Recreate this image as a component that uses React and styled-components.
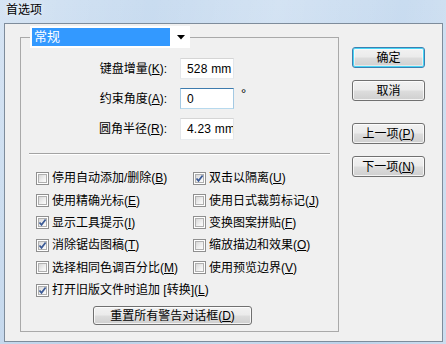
import React from "react";
import styled, { createGlobalStyle, css } from "styled-components";

const Global = createGlobalStyle`
  html, body { margin: 0; padding: 0; }
  body {
    font-family: "Liberation Sans", "Noto Sans CJK SC", sans-serif;
    font-size: 12px;
    color: #000;
    background: #c3d7ec;
  }
`;

const Frame = styled.div`
  width: 446px;
  height: 344px;
  box-sizing: border-box;
  display: flex;
  flex-direction: column;
  background:
    linear-gradient(100deg, rgba(255,255,255,0.25) 0%, rgba(255,255,255,0) 30%, rgba(255,255,255,0.2) 55%, rgba(255,255,255,0) 80%, rgba(255,255,255,0.25) 100%),
    linear-gradient(180deg, #c9dcf0 0%, #bcd2ea 100%);
`;

const TitleBar = styled.div`
  height: 23px;
  flex: none;
  display: flex;
  align-items: center;
  padding-left: 6px;
  padding-bottom: 3px;
  box-sizing: border-box;
  font-size: 12px;
  line-height: 14px;
  color: #000;
  text-shadow: 0 0 6px rgba(255,255,255,0.9);
`;

const Dialog = styled.div`
  margin-left: 4px;
  width: 439px;
  height: 319px;
  box-sizing: border-box;
  border: 1px solid #7e8c9b;
  background: #f0f0f0;
  display: flex;
  align-items: flex-start;
  padding-left: 15px;
`;

const Group = styled.fieldset`
  margin: 2px 0 0 0;
  padding: 0 0 6px 0;
  width: 319px;
  box-sizing: border-box;
  border: 1px solid #a9a9a9;
  min-width: 0;
`;

const Legend = styled.legend`
  margin-left: 9px;
  width: 160px;
  height: 22px;
  box-sizing: border-box;
  background: #fff;
  display: flex;
  align-items: center;
  padding: 2px 0 2px 2px;
`;

const Selected = styled.span`
  width: 138px;
  height: 18px;
  background: #3399ff;
  color: #fff;
  font-size: 13px;
  line-height: 18px;
  padding-left: 2px;
  box-sizing: border-box;
`;

const Arrow = styled.span`
  flex: 1;
  display: flex;
  justify-content: center;
  align-items: center;
  padding-left: 2px;
`;

const Fields = styled.div`
  margin-top: 10px;
  display: grid;
  grid-template-columns: 146px 54px auto;
  grid-auto-rows: 21px;
  column-gap: 13px;
  row-gap: 9px;
`;

const Label = styled.label`
  text-align: right;
  align-self: center;
  line-height: 14px;
  white-space: nowrap;
`;

const Input = styled.div`
  box-sizing: border-box;
  height: ${p => (p.$tall ? 22 : 21)}px;
  background: #fff;
  border: 1px solid;
  border-color: ${p =>
    p.$focus ? "#3d7bad #a4c9e3 #b7d9ed #a4c9e3" : "#d5d5d5 #e3e6ea #e9ecef #e3e6ea"};
  padding: 0 0 0 6px;
  display: flex;
  align-items: center;
  overflow: hidden;
  white-space: nowrap;
  font-size: 12px;
  line-height: 14px;
  letter-spacing: 0.2px;
`;

const Degree = styled.span`
  align-self: start;
  margin-left: -6px;
  font-size: 13px;
  line-height: 12px;
`;

const Separator = styled.div`
  margin: 14px 8px 0 8px;
  height: 1px;
  background: #a3a3a3;
  box-shadow: 0 1px 0 #fff;
`;

const Checks = styled.div`
  margin-top: 13px;
  padding-left: 15px;
  display: grid;
  grid-template-columns: 157px 1fr;
  grid-auto-rows: 22.4px;
`;

const CheckRow = styled.div`
  display: flex;
  align-items: center;
  gap: 3px;
  white-space: nowrap;
  line-height: 14px;
  ${p => p.$span && css`grid-column: 1 / span 2;`}
`;

const Box = styled.span`
  width: 13px;
  height: 13px;
  flex: none;
  box-sizing: border-box;
  border: 1px solid #8f8f8f;
  background: #fff;
  padding: 1px;
  display: flex;
  & > span {
    flex: 1;
    border: 1px solid #b0b0b0;
    background: linear-gradient(135deg, #d8d8d8 0%, #f0f0f0 60%, #fdfdfd 100%);
    display: flex;
    align-items: center;
    justify-content: center;
    position: relative;
  }
`;

const Check = styled.svg`
  position: absolute;
  left: -1px;
  top: -1px;
`;

const ResetRow = styled.div`
  margin-top: 5px;
  padding-left: 72px;
  display: flex;
`;

const Button = styled.button`
  font-family: inherit;
  font-size: 12px;
  line-height: 14px;
  color: #000;
  box-sizing: border-box;
  width: ${p => p.$w}px;
  height: ${p => p.$h || 21}px;
  margin: 0;
  padding: 0;
  border: 1px solid #707070;
  border-radius: 3px;
  background: linear-gradient(180deg, #f2f2f2 0%, #ebebeb 48%, #dddddd 52%, #cfcfcf 100%);
  box-shadow: inset 0 0 0 1px rgba(255,255,255,0.75);
  display: flex;
  align-items: center;
  justify-content: center;
  ${p => p.$default && css`
    border-color: #3c7fb1;
    box-shadow: inset 0 0 0 1px #48d6f6, inset 0 0 0 2px rgba(255,255,255,0.5);
  `}
`;

const Side = styled.div`
  margin-left: 13px;
  padding-top: 23px;
  display: flex;
  flex-direction: column;
`;

const Gap = styled.div`
  height: ${p => p.$h}px;
`;

function CheckBox({ checked }) {
  return (
    <Box>
      <span>
        {checked && (
          <Check width="9" height="9" viewBox="0 0 9 9">
            <path d="M1.5 4.5 L3.5 6.8 L7.6 1.4" fill="none" stroke="#3b5a96" strokeWidth="1.7" />
          </Check>
        )}
      </span>
    </Box>
  );
}

function Item({ checked, text, k, span }) {
  return (
    <CheckRow $span={span}>
      <CheckBox checked={checked} />
      <span>
        {text}(<u>{k}</u>)
      </span>
    </CheckRow>
  );
}

export default function App() {
  return (
    <>
      <Global />
      <Frame>
        <TitleBar>首选项</TitleBar>
        <Dialog>
          <Group>
            <Legend>
              <Selected>常规</Selected>
              <Arrow>
                <svg width="8" height="5" viewBox="0 0 8 5">
                  <path d="M0 0 H8 L4 4.5 Z" fill="#000" />
                </svg>
              </Arrow>
            </Legend>
            <Fields>
              <Label>键盘增量(<u>K</u>):</Label>
              <Input>528 mm</Input>
              <span />
              <Label>约束角度(<u>A</u>):</Label>
              <Input $focus>0</Input>
              <Degree>°</Degree>
              <Label>圆角半径(<u>R</u>):</Label>
              <Input $tall>4.23 mm</Input>
              <span />
            </Fields>
            <Separator />
            <Checks>
              <Item text="停用自动添加/删除" k="B" />
              <Item checked text="双击以隔离" k="U" />
              <Item text="使用精确光标" k="E" />
              <Item text="使用日式裁剪标记" k="J" />
              <Item checked text="显示工具提示" k="I" />
              <Item text="变换图案拼贴" k="F" />
              <Item checked text="消除锯齿图稿" k="T" />
              <Item text="缩放描边和效果" k="O" />
              <Item text="选择相同色调百分比" k="M" />
              <Item text="使用预览边界" k="V" />
              <Item checked span text="打开旧版文件时追加 [转换]" k="L" />
            </Checks>
            <ResetRow>
              <Button $w={159} $h={19}>重置所有警告对话框(<u>D</u>)</Button>
            </ResetRow>
          </Group>
          <Side>
            <Button $w={73} $default>确定</Button>
            <Gap $h={12} />
            <Button $w={73}>取消</Button>
            <Gap $h={22} />
            <Button $w={73}>上一项(<u>P</u>)</Button>
            <Gap $h={12} />
            <Button $w={73}>下一项(<u>N</u>)</Button>
          </Side>
        </Dialog>
      </Frame>
    </>
  );
}
